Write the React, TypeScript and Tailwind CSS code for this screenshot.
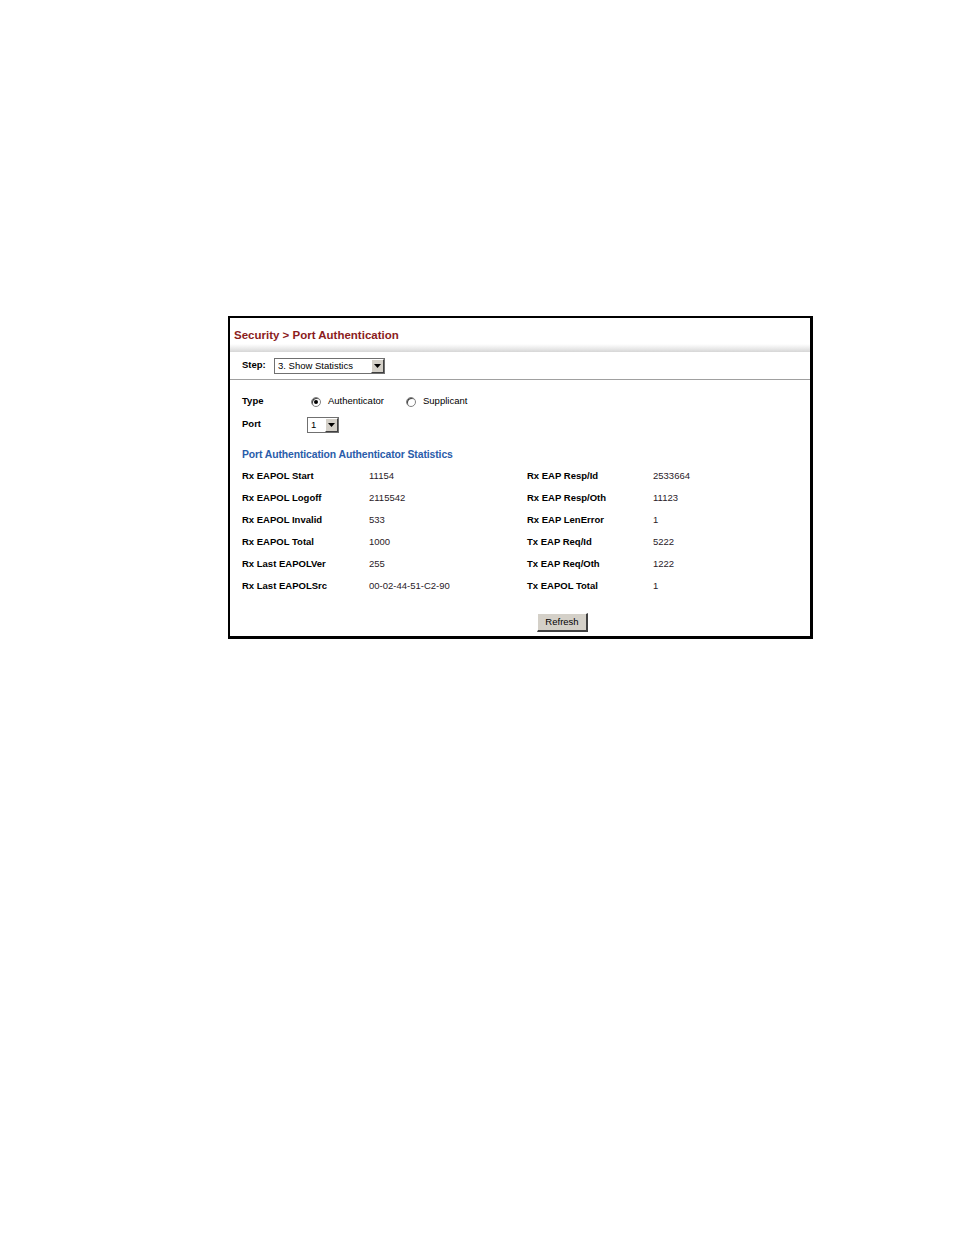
import React from 'react';

const leftStats = [
  ['Rx EAPOL Start', '11154'],
  ['Rx EAPOL Logoff', '2115542'],
  ['Rx EAPOL Invalid', '533'],
  ['Rx EAPOL Total', '1000'],
  ['Rx Last EAPOLVer', '255'],
  ['Rx Last EAPOLSrc', '00-02-44-51-C2-90'],
];

const rightStats = [
  ['Rx EAP Resp/Id', '2533664'],
  ['Rx EAP Resp/Oth', '11123'],
  ['Rx EAP LenError', '1'],
  ['Tx EAP Req/Id', '5222'],
  ['Tx EAP Req/Oth', '1222'],
  ['Tx EAPOL Total', '1'],
];

const DropArrow = () => (
  <div className="w-[13px] h-full bg-[#d4d0c8] border-l border-t border-white border-r border-b border-r-[#404040] border-b-[#404040] flex items-center justify-center">
    <svg width="7" height="4" viewBox="0 0 7 4">
      <path d="M0 0h7L3.5 4z" fill="#000" />
    </svg>
  </div>
);

const Radio = ({ checked }: { checked?: boolean }) => (
  <span className="w-[10px] h-[10px] rounded-full border border-[#808080] bg-white shadow-[inset_1px_1px_0_#404040] flex items-center justify-center">
    {checked && <span className="w-[4px] h-[4px] rounded-full bg-black" />}
  </span>
);

export default function App() {
  return (
    <div className="min-h-[1235px] bg-white pt-[316px] pl-[228px] font-['Liberation_Sans',Arial,sans-serif]">
      <div className="w-[585px] border-t-[2px] border-l-[2px] border-r-[3px] border-b-[3px] border-black">
        {/* title bar */}
        <div className="h-[26px] px-[4px] flex items-end">
          <span className="text-[11.5px] font-bold text-[#8b1c1c] leading-none pb-[3px]">
            Security &gt; Port Authentication
          </span>
        </div>
        <div className="h-[8px] bg-gradient-to-b from-white via-[#ececec] to-[#d6d6d6]" />

        {/* step row */}
        <div className="h-[28px] flex items-center px-[12px] border-b border-[#a0a0a0]">
          <span className="text-[9.5px] font-bold text-black w-[32px]">Step:</span>
          <div className="w-[111px] h-[16px] border border-[#707070] flex items-stretch bg-white">
            <span className="flex-1 text-[9.5px] text-black pl-[3px] leading-[14px]">3. Show Statistics</span>
            <DropArrow />
          </div>
        </div>

        {/* type / port */}
        <div className="pt-[10px] px-[12px] text-[9.5px] text-black">
          <div className="h-[23px] flex items-center">
            <span className="font-bold w-[69px]">Type</span>
            <Radio checked />
            <span className="ml-[7px] w-[78px]">Authenticator</span>
            <Radio />
            <span className="ml-[7px]">Supplicant</span>
          </div>
          <div className="h-[23px] flex items-center">
            <span className="font-bold w-[65px]">Port</span>
            <div className="w-[32px] h-[16px] border border-[#707070] flex items-stretch bg-white">
              <span className="flex-1 pl-[3px] leading-[14px]">1</span>
              <DropArrow />
            </div>
          </div>
        </div>

        {/* statistics */}
        <div className="mt-[10px] px-[12px] h-[18px] flex items-center">
          <span className="text-[10.4px] font-bold text-[#2a5caa] tracking-[-0.1px]">Port Authentication Authenticator Statistics</span>
        </div>
        <div className="mt-[1px] px-[12px] flex text-[9.5px]">
          <div className="flex flex-col">
            {leftStats.map(([label, value]) => (
              <div key={label} className="h-[22px] flex items-center">
                <span className="w-[127px] font-bold text-black">{label}</span>
                <span className="w-[158px] text-[#2a1a28]">{value}</span>
              </div>
            ))}
          </div>
          <div className="flex flex-col">
            {rightStats.map(([label, value]) => (
              <div key={label} className="h-[22px] flex items-center">
                <span className="w-[126px] font-bold text-black">{label}</span>
                <span className="text-[#2a1a28]">{value}</span>
              </div>
            ))}
          </div>
        </div>

        <div className="mt-[16px] pb-[4px] pl-[307px] flex">
          <button className="w-[51px] h-[19px] bg-[#d4d0c8] border-t border-l border-white border-r-[2px] border-b-[2px] border-r-[#404040] border-b-[#404040] text-[9.5px] text-black leading-none">
            Refresh
          </button>
        </div>
      </div>
    </div>
  );
}
